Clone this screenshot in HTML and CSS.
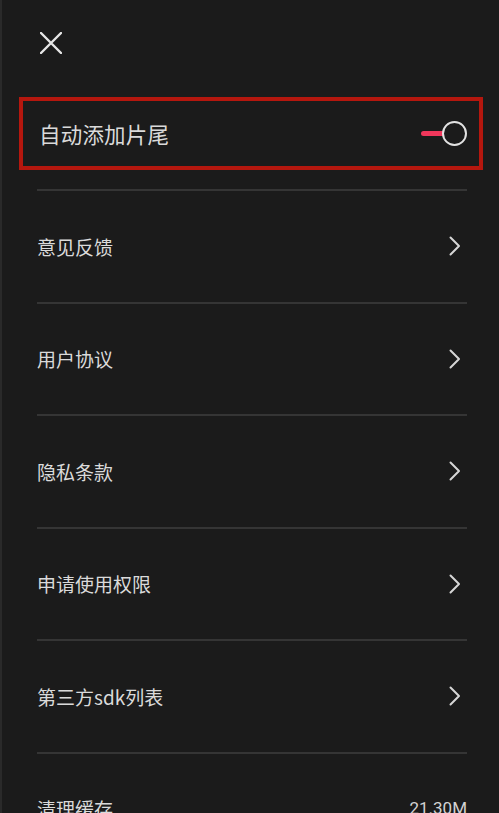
FILE: index.html
```html
<!DOCTYPE html>
<html lang="zh-CN">
<head>
<meta charset="utf-8">
<title>设置</title>
<link rel="stylesheet" href="styles.css">
</head>
<body>
<div class="screen">
  <header class="top">
    <svg class="close" width="22" height="22" viewBox="0 0 22 22" aria-label="关闭">
      <path d="M1 1 L21 21 M21 1 L1 21" stroke="#e6e6e6" stroke-width="2.4" stroke-linecap="round" fill="none"/>
    </svg>
  </header>

  <div class="highlight">
    <div class="row-first">
      <span class="label-big">自动添加片尾</span>
      <span class="toggle">
        <span class="track"></span>
        <span class="knob"></span>
      </span>
    </div>
  </div>

  <ul class="list">
    <li class="item"><span class="label">意见反馈</span><svg class="chev" width="12" height="20" viewBox="0 0 12 20"><path d="M1.5 1.5 L10 10 L1.5 18.5" stroke="#d6d6d6" stroke-width="2" fill="none" stroke-linecap="round" stroke-linejoin="round"/></svg></li>
    <li class="item"><span class="label">用户协议</span><svg class="chev" width="12" height="20" viewBox="0 0 12 20"><path d="M1.5 1.5 L10 10 L1.5 18.5" stroke="#d6d6d6" stroke-width="2" fill="none" stroke-linecap="round" stroke-linejoin="round"/></svg></li>
    <li class="item"><span class="label">隐私条款</span><svg class="chev" width="12" height="20" viewBox="0 0 12 20"><path d="M1.5 1.5 L10 10 L1.5 18.5" stroke="#d6d6d6" stroke-width="2" fill="none" stroke-linecap="round" stroke-linejoin="round"/></svg></li>
    <li class="item"><span class="label">申请使用权限</span><svg class="chev" width="12" height="20" viewBox="0 0 12 20"><path d="M1.5 1.5 L10 10 L1.5 18.5" stroke="#d6d6d6" stroke-width="2" fill="none" stroke-linecap="round" stroke-linejoin="round"/></svg></li>
    <li class="item"><span class="label">第三方sdk列表</span><svg class="chev" width="12" height="20" viewBox="0 0 12 20"><path d="M1.5 1.5 L10 10 L1.5 18.5" stroke="#d6d6d6" stroke-width="2" fill="none" stroke-linecap="round" stroke-linejoin="round"/></svg></li>
    <li class="item"><span class="label">清理缓存</span><span class="value">21.30M</span></li>
  </ul>
</div>
</body>
</html>
```

FILE: styles.css
```css
html, body {
  margin: 0;
  padding: 0;
  height: 100%;
  background: #1b1b1b;
  overflow: hidden;
}

body {
  font-family: "Noto Sans CJK SC", "Noto Sans", sans-serif;
  color: #dadada;
}

.screen {
  height: 813px;
  border-left: 2px solid #2a2a2a;
  box-sizing: border-box;
  overflow: hidden;
}

.top {
  height: 97px;
  padding: 32px 0 0 38px;
  box-sizing: border-box;
}

.close {
  display: block;
}

.highlight {
  margin: 0 16px 0 17px;
  height: 73px;
  box-sizing: border-box;
  border: 4px solid #b5170e;
}

.row-first {
  height: 100%;
  display: flex;
  align-items: center;
  justify-content: space-between;
  padding: 0 12px 0 16px;
}

.label-big {
  font-size: 21.5px;
  line-height: 1;
  letter-spacing: 0.2px;
}

.toggle {
  display: flex;
  align-items: center;
}

.track {
  width: 24px;
  height: 5px;
  border-radius: 3px;
  background: #f0375b;
  margin-right: -3px;
}

.knob {
  width: 21px;
  height: 21px;
  border-radius: 50%;
  border: 2px solid #e2e2e2;
  background: #1b1b1b;
}

.list {
  list-style: none;
  margin: 19px 0 0;
  padding: 0 32px 0 35px;
}

.item {
  height: 110.5px;
  border-top: 2px solid #353535;
  display: flex;
  align-items: center;
  justify-content: space-between;
}

.label {
  font-size: 19px;
  line-height: 1;
}

.chev {
  display: block;
  margin-right: 6px;
}

.value {
  font-family: Roboto, "Noto Sans", sans-serif;
  font-size: 17px;
  line-height: 1;
  color: #d2d2d2;
}
```
